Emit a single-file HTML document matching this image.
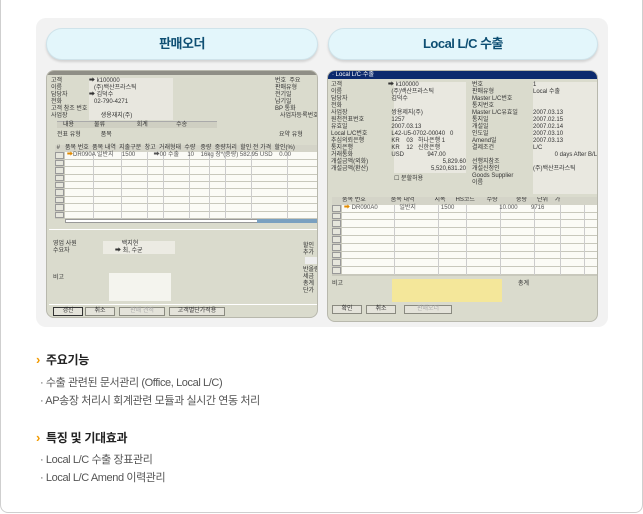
<!DOCTYPE html>
<html><head><meta charset="utf-8"><style>
*{margin:0;padding:0;box-sizing:border-box}
body{width:643px;height:514px;background:#fff;position:relative;overflow:hidden;font-family:"Liberation Sans","Noto Sans CJK KR",sans-serif}
.abs{position:absolute}
.outer{left:0;top:-10px;width:643px;height:523px;border:1px solid #cfcfcf;border-radius:8px}
.gbox{left:36px;top:18px;width:572px;height:309px;background:#f2f2f2;border-radius:10px}
.pill{top:28px;height:32px;background:#e3f6fb;border:1px solid #cfe3ea;border-radius:16px;box-shadow:0 2px 2px #d2d2d2;text-align:center;line-height:30px;font-size:13px;font-weight:bold;color:#0e4f73;letter-spacing:-0.5px}
.shot{background:#dadbcd;border-radius:8px;overflow:hidden;border:1px solid #b8b8ad;font-size:6px;color:#333;line-height:7px}
.t{position:absolute;white-space:nowrap}
.f{position:absolute;background:#ecebe3;height:6px}
.w{position:absolute;background:#fff}
.btn{position:absolute;height:9px;background:#e4e3da;border:1px solid #8a8a80;font-size:6px;text-align:center;line-height:7px}
h3{position:absolute;font-size:12px;font-weight:bold;color:#222;letter-spacing:-0.3px}
h3 span{color:#f29a00;font-size:13px;margin-right:6px}
.li{position:absolute;font-size:11px;color:#555;letter-spacing:-0.4px}
</style></head><body>
<div class="abs outer"></div>
<div class="abs gbox"></div>
<div class="abs pill" style="left:46px;width:272px">판매오더</div>
<div class="abs pill" style="left:328px;width:270px">Local L/C 수출</div>

<!-- left shot -->
<div class="abs shot" style="left:46px;top:70px;width:272px;height:248px">
 <div class="abs" style="left:0;top:0;width:272px;height:4px;background:#8f8e86"></div>
 <div class="t" style="left:4px;top:7px">고객<br>이름<br>담당자<br>전화<br>고객 참조 번호<br>사업장</div>
 <div class="f" style="left:42px;top:7px;width:84px;height:42px;background:#e8e7df"></div>
 <div class="t" style="left:42px;top:7px">➡ k100000<br>&nbsp;&nbsp;&nbsp;(주)백산프라스틱<br>➡ 김덕수<br>&nbsp;&nbsp;&nbsp;02-790-4271<br><br>&nbsp;&nbsp;&nbsp;&nbsp;&nbsp;&nbsp;&nbsp;생용재지(주)</div>
 <div class="t" style="left:228px;top:7px">번호 &nbsp;주요<br>판매유형<br>전기일<br>납기일<br>BP 통화<br>&nbsp;&nbsp;&nbsp;사업자등록번호</div>
 <div class="abs" style="left:10px;top:50px;width:160px;height:7px;background:#cfcfc2;border-top:1px solid #aaa"></div>
 <div class="t" style="left:16px;top:51px">내용 &nbsp;&nbsp;&nbsp;&nbsp;&nbsp;&nbsp;&nbsp;&nbsp;&nbsp;&nbsp;&nbsp;물류 &nbsp;&nbsp;&nbsp;&nbsp;&nbsp;&nbsp;&nbsp;&nbsp;&nbsp;&nbsp;&nbsp;&nbsp;&nbsp;&nbsp;&nbsp;&nbsp;&nbsp;&nbsp;회계 &nbsp;&nbsp;&nbsp;&nbsp;&nbsp;&nbsp;&nbsp;&nbsp;&nbsp;&nbsp;&nbsp;&nbsp;&nbsp;&nbsp;&nbsp;&nbsp;수송</div>
 <div class="t" style="left:10px;top:61px">전표 유형 &nbsp;&nbsp;&nbsp;&nbsp;&nbsp;&nbsp;&nbsp;&nbsp;&nbsp;&nbsp;&nbsp;품목</div>
 <div class="t" style="left:232px;top:61px">요약 유형</div>
 <div class="abs" id="lg" style="left:8px;top:74px;width:264px;height:74px;background:#c8c8bc"></div>
 <div class="abs" style="left:18px;top:148px;width:254px;height:4px;background:#fff;border:1px solid #999"></div>
 <div class="abs" style="left:210px;top:148px;width:62px;height:4px;background:#7aa0c0"></div>
 <div class="abs" style="left:2px;top:158px;width:270px;height:1px;background:#fff"></div>
 <div class="t" style="left:6px;top:170px">영업 사원<br>수요자</div>
 <div class="f" style="left:56px;top:170px;width:72px;height:13px"></div>
 <div class="t" style="left:58px;top:170px">&nbsp;&nbsp;&nbsp;&nbsp;&nbsp;&nbsp;&nbsp;&nbsp;&nbsp;&nbsp;백지현<br>&nbsp;&nbsp;&nbsp;&nbsp;&nbsp;&nbsp;➡ 최, 수균</div>
 <div class="t" style="left:256px;top:172px">할인<br>추가</div>
 <div class="w" style="left:258px;top:186px;width:14px;height:7px;background:#eee"></div>
 <div class="t" style="left:256px;top:196px">반올림<br>세금<br>총계<br>단가</div>
 <div class="t" style="left:6px;top:204px">비고</div>
 <div class="w" style="left:62px;top:202px;width:62px;height:28px;background:#f4f4ee"></div>
 <div class="abs" style="left:2px;top:233px;width:270px;height:1px;background:#fff"></div>
 <div class="btn" style="left:6px;top:236px;width:30px;border-color:#333">갱신</div>
 <div class="btn" style="left:38px;top:236px;width:30px">취소</div>
 <div class="btn" style="left:72px;top:236px;width:46px;color:#aaa">판매 견적</div>
 <div class="btn" style="left:122px;top:236px;width:56px">고객별단가적용</div>
</div>

<!-- right shot -->
<div class="abs shot" style="left:327px;top:70px;width:271px;height:252px">
 <div class="abs" style="left:0;top:0;width:271px;height:8px;background:#0c2a6e;color:#fff;font-size:6px;line-height:8px;padding-left:4px">· Local L/C·수출</div>
 <div class="t" style="left:3px;top:11px">고객<br>이름<br>담당자<br>전화<br>사업장<br>원천전표번호<br>유효일<br>Local L/C번호<br>추심의뢰은행<br>통지은행<br>거래통화<br>개설금액(외화)<br>개설금액(환산)</div>
 <div class="f" style="left:66px;top:11px;width:72px;height:91px;background:#e9e8e0"></div>
 <div class="t" style="left:60px;top:11px">➡ k100000<br>&nbsp;&nbsp;(주)백산프라스틱<br>&nbsp;&nbsp;김덕수<br><br>&nbsp;&nbsp;쌍용제지(주)<br>&nbsp;&nbsp;1257<br>&nbsp;&nbsp;2007.03.13<br>&nbsp;&nbsp;L42-U5-0702-00040 &nbsp;&nbsp;0<br>&nbsp;&nbsp;KR &nbsp;&nbsp;&nbsp;03 &nbsp;&nbsp;하나은행 1<br>&nbsp;&nbsp;KR &nbsp;&nbsp;&nbsp;12 &nbsp;&nbsp;신한은행<br>&nbsp;&nbsp;USD &nbsp;&nbsp;&nbsp;&nbsp;&nbsp;&nbsp;&nbsp;&nbsp;&nbsp;&nbsp;&nbsp;&nbsp;&nbsp;947.00</div>
 <div class="t" style="left:90px;top:88px;text-align:right;width:48px">5,829.60<br>5,520,631.20</div>
 <div class="t" style="left:66px;top:105px">☐ 분할허용</div>
 <div class="t" style="left:144px;top:11px">번호<br>판매유형<br>Master L/C번호<br>통지번호<br>Master L/C유효일<br>통지일<br>개설일<br>인도일<br>Amend일<br>결제조건<br><br>선행지참조<br>개설신청인<br>Goods Supplier<br>이름</div>
 <div class="f" style="left:205px;top:11px;width:66px;height:112px;background:#e9e8e0"></div>
 <div class="t" style="left:205px;top:11px">1<br>Local 수출<br><br><br>2007.03.13<br>2007.02.15<br>2007.02.14<br>2007.03.10<br>2007.03.13<br>L/C<br>&nbsp;&nbsp;&nbsp;&nbsp;&nbsp;&nbsp;&nbsp;&nbsp;&nbsp;&nbsp;&nbsp;&nbsp;&nbsp;0 days After B/L<br><br>(주)백산프라스틱</div>
 <div class="abs" id="rg" style="left:4px;top:126px;width:267px;height:79px;background:#c8c8bc;overflow:hidden"></div>
 <div class="t" style="left:4px;top:210px">비고</div>
 <div class="abs" style="left:64px;top:208px;width:110px;height:23px;background:#f4e79a"></div>
 <div class="t" style="left:190px;top:210px">총계</div>
 <div class="btn" style="left:4px;top:234px;width:30px">확인</div>
 <div class="btn" style="left:38px;top:234px;width:30px">취소</div>
 <div class="btn" style="left:76px;top:234px;width:48px;color:#aaa">판매오더</div>
</div>

<h3 style="left:36px;top:351px"><span>›</span>주요기능</h3>
<div class="li" style="left:40px;top:374px">· 수출 관련된 문서관리 (Office, Local L/C)</div>
<div class="li" style="left:40px;top:392px">· AP송장 처리시 회계관련 모듈과 실시간 연동 처리</div>
<h3 style="left:36px;top:429px"><span>›</span>특징 및 기대효과</h3>
<div class="li" style="left:40px;top:451px">· Local L/C 수출 장표관리</div>
<div class="li" style="left:40px;top:469px">· Local L/C Amend 이력관리</div>

<script>
function grid(id,cols,rows,rh,hdr,first){
 var g=document.getElementById(id),h='',x=0;
 var W=g.offsetWidth;
 h+='<div style="position:absolute;left:0;top:0;width:'+W+'px;height:'+rh+'px;background:#d4d4c8;font-size:6px;line-height:'+rh+'px;white-space:nowrap;color:#333">'+hdr+'</div>';
 for(var r=1;r<=rows;r++){
  h+='<div style="position:absolute;left:0;top:'+(r*rh)+'px;width:9px;height:'+(rh-1)+'px;background:#e6e6dc;border:1px solid #999"></div>';
  h+='<div style="position:absolute;left:10px;top:'+(r*rh)+'px;width:'+(W-10)+'px;height:'+(rh-1)+'px;background:#fbfbf6"></div>';
 }
 x=10;cols.forEach(function(c){x+=c;h+='<div style="position:absolute;left:'+x+'px;top:'+rh+'px;width:1px;height:'+(rows*rh)+'px;background:#ccc"></div>';});
 h+='<div style="position:absolute;left:12px;top:'+rh+'px;font-size:6px;line-height:'+rh+'px;white-space:nowrap;color:#555">'+first+'</div>';
 g.innerHTML=h;
}
grid('lg',[28,28,26,16,26,20,16,26,36,30],9,7.4,'&nbsp;# &nbsp;&nbsp;품목 번호 &nbsp;품목 내역 &nbsp;지출구분 &nbsp;창고 &nbsp;거래형태 &nbsp;수량 &nbsp;&nbsp;중량 &nbsp;중량처리 &nbsp;할인 전 가격 &nbsp;할인(%)','<span style="color:#e08a00">➡</span>DR090A 일반지 &nbsp;&nbsp;&nbsp;&nbsp;1500 &nbsp;&nbsp;&nbsp;&nbsp;&nbsp;&nbsp;&nbsp;&nbsp;&nbsp;&nbsp;➡00 수출 &nbsp;&nbsp;&nbsp;&nbsp;10 &nbsp;&nbsp;&nbsp;16kg 장*(중량) 582.95 USD &nbsp;&nbsp;&nbsp;0.00');
grid('rg',[52,44,28,34,34,26,24],9,7.8,'&nbsp;&nbsp;&nbsp;&nbsp;&nbsp;&nbsp;품목 번호 &nbsp;&nbsp;&nbsp;&nbsp;&nbsp;&nbsp;&nbsp;&nbsp;&nbsp;&nbsp;&nbsp;&nbsp;&nbsp;&nbsp;품목 내역 &nbsp;&nbsp;&nbsp;&nbsp;&nbsp;&nbsp;&nbsp;&nbsp;&nbsp;&nbsp;&nbsp;지폭 &nbsp;&nbsp;&nbsp;&nbsp;&nbsp;HS코드 &nbsp;&nbsp;&nbsp;&nbsp;&nbsp;&nbsp;수량 &nbsp;&nbsp;&nbsp;&nbsp;&nbsp;&nbsp;&nbsp;&nbsp;&nbsp;&nbsp;중량 &nbsp;&nbsp;&nbsp;&nbsp;&nbsp;단위 &nbsp;&nbsp;&nbsp;가','<span style="color:#e08a00">➡</span> DR090A0 &nbsp;&nbsp;&nbsp;&nbsp;&nbsp;&nbsp;&nbsp;&nbsp;&nbsp;&nbsp;&nbsp;&nbsp;일반지 &nbsp;&nbsp;&nbsp;&nbsp;&nbsp;&nbsp;&nbsp;&nbsp;&nbsp;&nbsp;&nbsp;&nbsp;&nbsp;&nbsp;1500 &nbsp;&nbsp;&nbsp;&nbsp;&nbsp;&nbsp;&nbsp;&nbsp;&nbsp;&nbsp;&nbsp;&nbsp;&nbsp;&nbsp;&nbsp;&nbsp;&nbsp;&nbsp;&nbsp;&nbsp;&nbsp;&nbsp;&nbsp;&nbsp;&nbsp;&nbsp;10.000 &nbsp;&nbsp;&nbsp;&nbsp;&nbsp;&nbsp;&nbsp;9716');
</script>
</body></html>
